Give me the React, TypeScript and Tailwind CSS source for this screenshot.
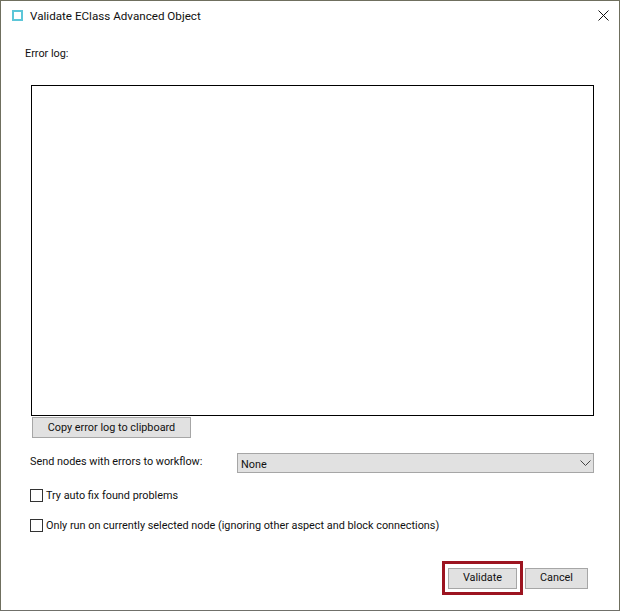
const font = "font-['Roboto','Noto_Sans',sans-serif]";
const bodyText = "text-[10.85px] leading-[16px] text-[#111111]";
const flatButton = `border border-[#a6a6a6] bg-[#e1e1e1] ${bodyText}`;

function CheckRow({ label, className }: { label: string; className: string }) {
  return (
    <label className={`flex items-center ${className}`}>
      <span className="h-[13px] w-[13px] shrink-0 border border-[#333333] bg-white" />
      <span className={`ml-[3px] pt-[2px] ${bodyText}`}>{label}</span>
    </label>
  );
}

export default function App() {
  return (
    <div className={`h-[611px] w-[620px] overflow-hidden bg-white ${font}`}>
      <div className="flex h-[611px] w-[620px] flex-col border border-[#6f6f5e] border-b-[#70706a]">
        <div className="flex h-[31px] shrink-0 items-center pl-[11px] pr-[10px]">
          <span className="mb-[2px] h-[11px] w-[11px] border-2 border-[#5cc6d8] bg-white" />
          <span className="ml-[7px] pb-[2px] text-[11.65px] leading-[16px] text-[#111111]">Validate EClass Advanced Object</span>
          <svg className="mb-[2px] ml-auto h-[11px] w-[11px]" viewBox="0 0 11 11" fill="none" stroke="#111111" strokeWidth="1">
            <path d="M0.5 0.5L10.5 10.5M10.5 0.5L0.5 10.5" />
          </svg>
        </div>

        <div className={`pl-[24px] pt-[14px] ${bodyText}`}>Error log:</div>

        <div className="ml-[30px] mt-[23px] h-[331px] w-[563px] shrink-0 border border-black bg-white" />

        <button className={`ml-[31px] mt-[1px] h-[21px] w-[159px] shrink-0 ${flatButton}`}>
          Copy error log to clipboard
        </button>

        <div className="ml-[29px] mt-[15px] flex items-center">
          <span className={`w-[207px] pb-[2px] ${bodyText}`}>Send nodes with errors to workflow:</span>
          <div className="flex h-[20px] w-[357px] items-center justify-between border border-[#a6a6a6] bg-[#e1e1e1] pl-[3px] pr-[2px]">
            <span className={`pt-[3px] ${bodyText}`}>None</span>
            <svg className="h-[7px] w-[11px]" viewBox="0 0 11 7" fill="none" stroke="#444444" strokeWidth="1">
              <path d="M0.5 0.5L5.5 5.5L10.5 0.5" />
            </svg>
          </div>
        </div>

        <CheckRow className="ml-[29px] mt-[13px]" label="Try auto fix found problems" />
        <CheckRow className="ml-[29px] mt-[12px]" label="Only run on currently selected node (ignoring other aspect and block connections)" />

        <div className="mr-[31px] mt-[27px] flex items-center justify-end">
          <div className="flex h-[34px] w-[81px] items-center justify-center border-[3px] border-[#9c1420]">
            <button className={`h-[21px] w-[69px] ${flatButton}`}>Validate</button>
          </div>
          <button className={`ml-[2px] h-[21px] w-[63px] ${flatButton}`}>Cancel</button>
        </div>
      </div>
    </div>
  );
}
